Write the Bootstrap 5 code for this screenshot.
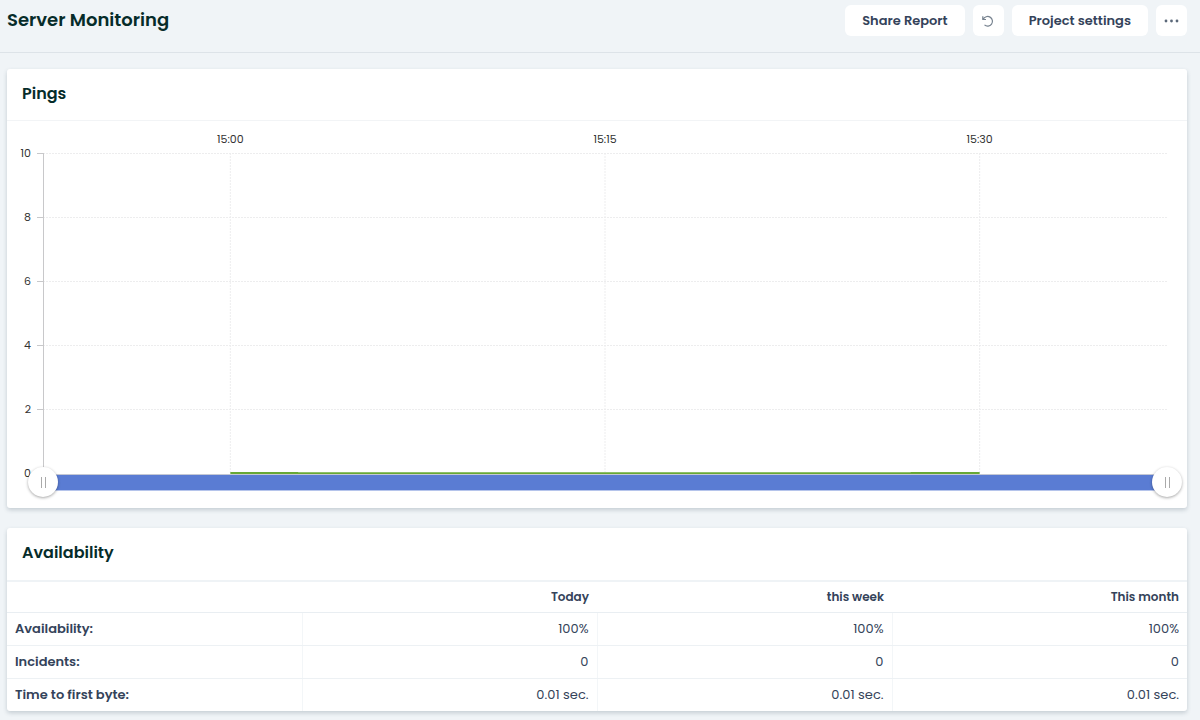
<!DOCTYPE html>
<html lang="en">
<head>
<meta charset="utf-8">
<meta name="viewport" content="width=device-width, initial-scale=1">
<title>Server Monitoring</title>
<link href="https://cdn.jsdelivr.net/npm/bootstrap@5.3.0/dist/css/bootstrap.min.css" rel="stylesheet">
<style>
  body { background: #f0f4f7; color: #34435a; font-family: Poppins, Inter, "Liberation Sans", sans-serif; font-size: 13px; line-height: 20px; }
  .page-head { border-bottom: 1px solid #dde3e8; padding: 5px 13px 16px 7px; }
  .page-title { color: #062c2a; font-size: 18px; line-height: 30px; font-weight: 600; }
  .tool-btn { --bs-btn-bg: #fff; --bs-btn-color: #34435a; --bs-btn-hover-bg: #f9fbfc; --bs-btn-hover-color: #34435a; --bs-btn-active-bg: #e9eef2;
    --bs-btn-padding-x: 17px; --bs-btn-padding-y: 0px; --bs-btn-border-width: 0; --bs-btn-border-radius: 6px; --bs-btn-font-weight: 600;
    --bs-btn-font-size: 13px; height: 31px; }
  .tool-icon { --bs-btn-padding-x: 0px; width: 31px; }
  .page-main { padding: 16px 13px 9px 7px; gap: 20px; }
  .panel { --bs-card-border-width: 0; --bs-card-border-radius: 3px; --bs-card-inner-border-radius: 3px; box-shadow: 0 2px 4px rgba(60, 80, 95, .24); }
  .panel-head { padding: 13px 15px 14px; border-bottom: 1px solid #f2f4f6; }
  .panel-title { color: #062c2a; font-size: 16px; line-height: 24px; font-weight: 600; }
  .chart-area { padding: 10px 20px 11px 0; color: #333; font-size: 11px; line-height: 16px; }
  .y-labels { width: 24px; height: 336px; margin-top: 14px; text-align: right; }
  .plot { margin-left: 12px; }
  .x-labels { margin-bottom: 6px; }
  .plot-svg { height: 321px; overflow: visible; }
  .grid-line { stroke: #ededee; stroke-width: 1; stroke-dasharray: 2 1; }
  .scrollbar-range { height: 30px; margin: -7px -15px 0; }
  .scrollbar-range > * { grid-area: 1 / 1; }
  .range-fill { height: 17px; margin: 0 15px; align-self: center; background: #5a7cd3; border-top: 1px solid #c4c8d4; border-bottom: 1px solid #b5c4eb; }
  .range-thumb { appearance: none; -webkit-appearance: none; background: transparent; width: 100%; height: 30px; margin: 0; pointer-events: none; z-index: 1; }
  .range-thumb::-webkit-slider-thumb { -webkit-appearance: none; width: 30px; height: 30px; border: 0; border-radius: 50%; pointer-events: auto; cursor: ew-resize;
    background: linear-gradient(90deg, #aaa 1px, transparent 1px 4px, #aaa 4px) center / 5px 11px no-repeat, #fff; box-shadow: 0 1px 3px rgba(0, 0, 0, .35); }
  .panel-head-table { border-bottom: 2px solid #eff3f6; padding-bottom: 15px; }
  .stats { --bs-table-color: #34435a; --bs-table-bg: transparent; table-layout: fixed; }
  .stats th, .stats td { padding: 6px 8px; border-bottom: 1px solid #edf1f4; font-weight: 400; color: #34435a; }
  .stats th { font-weight: 600; }
  .stats thead th { font-size: 12px; line-height: 18px; border-bottom: 1px solid #e9eef2; }
  .stats tbody tr > :not(:last-child) { border-right: 1px solid #f3f6f8; }
  .stats tbody tr:last-child > * { border-bottom: 0; }
</style>
</head>
<body>
<header class="page-head d-flex align-items-start justify-content-between">
  <h1 class="page-title mb-0">Server Monitoring</h1>
  <div class="d-flex gap-2">
    <button type="button" class="btn tool-btn">Share Report</button>
    <button type="button" class="btn tool-btn tool-icon d-flex align-items-center justify-content-center" aria-label="Refresh">
      <svg width="14" height="14" viewBox="0 0 14 14" fill="none" stroke="#76828f" stroke-width="1.200" aria-hidden="true"><path d="M1.800 2.300v3.200h3.200M2.300 5.300A4.800 4.800 0 1 1 3.500 10.900"/></svg>
    </button>
    <button type="button" class="btn tool-btn">Project settings</button>
    <button type="button" class="btn tool-btn tool-icon d-flex align-items-center justify-content-center" aria-label="More">
      <svg width="15" height="4" viewBox="0 0 15 4" fill="#5b6879" aria-hidden="true"><circle cx="2" cy="2" r="1.400"/><circle cx="7.500" cy="2" r="1.400"/><circle cx="13" cy="2" r="1.400"/></svg>
    </button>
  </div>
</header>

<main class="page-main d-flex flex-column">
  <section class="card panel">
    <div class="panel-head"><h2 class="panel-title mb-0">Pings</h2></div>
    <div class="chart-area d-flex">
      <div class="y-labels d-flex flex-column justify-content-between">
        <span>10</span><span>8</span><span>6</span><span>4</span><span>2</span><span>0</span>
      </div>
      <div class="plot flex-fill">
        <div class="x-labels row g-0 text-center">
          <span class="col">15:00</span><span class="col">15:15</span><span class="col">15:30</span>
        </div>
        <svg class="plot-svg d-block w-100" role="img" aria-label="Pings over time">
          <g class="grid-line">
            <line x1="0" x2="100%" y1="0.5" y2="0.5"/><line x1="0" x2="100%" y1="64.5" y2="64.5"/><line x1="0" x2="100%" y1="128.5" y2="128.5"/>
            <line x1="0" x2="100%" y1="192.5" y2="192.5"/><line x1="0" x2="100%" y1="256.5" y2="256.5"/>
            <line x1="16.667%" x2="16.667%" y1="0" y2="320"/><line x1="50%" x2="50%" y1="0" y2="320"/><line x1="83.333%" x2="83.333%" y1="0" y2="320"/>
          </g>
          <g stroke="#c8c8ca">
            <line x1="0.5" x2="0.5" y1="0" y2="320"/>
            <line x1="-6" x2="0" y1="0.5" y2="0.5"/><line x1="-6" x2="0" y1="64.5" y2="64.5"/><line x1="-6" x2="0" y1="128.5" y2="128.5"/>
            <line x1="-6" x2="0" y1="192.5" y2="192.5"/><line x1="-6" x2="0" y1="256.5" y2="256.5"/>
          </g>
          <line x1="16.667%" x2="83.333%" y1="320" y2="320" stroke="#68a834" stroke-width="2"/>
          <line x1="22.700%" x2="77.200%" y1="319.5" y2="319.5" stroke="#8fbf68"/>
        </svg>
        <div class="scrollbar-range d-grid">
          <div class="range-fill"></div>
          <input type="range" class="range-thumb" min="0" max="100" value="0" aria-label="Range start">
          <input type="range" class="range-thumb" min="0" max="100" value="100" aria-label="Range end">
        </div>
      </div>
    </div>
  </section>

  <section class="card panel">
    <div class="panel-head panel-head-table"><h2 class="panel-title mb-0">Availability</h2></div>
    <table class="table stats mb-0">
      <thead><tr><th aria-label="Metric"></th><th scope="col" class="text-end">Today</th><th scope="col" class="text-end">this week</th><th scope="col" class="text-end">This month</th></tr></thead>
      <tbody>
        <tr><th scope="row">Availability:</th><td class="text-end">100%</td><td class="text-end">100%</td><td class="text-end">100%</td></tr>
        <tr><th scope="row">Incidents:</th><td class="text-end">0</td><td class="text-end">0</td><td class="text-end">0</td></tr>
        <tr><th scope="row">Time to first byte:</th><td class="text-end">0.01 sec.</td><td class="text-end">0.01 sec.</td><td class="text-end">0.01 sec.</td></tr>
      </tbody>
    </table>
  </section>
</main>
<script src="https://cdn.jsdelivr.net/npm/bootstrap@5.3.0/dist/js/bootstrap.bundle.min.js"></script>
</body>
</html>
